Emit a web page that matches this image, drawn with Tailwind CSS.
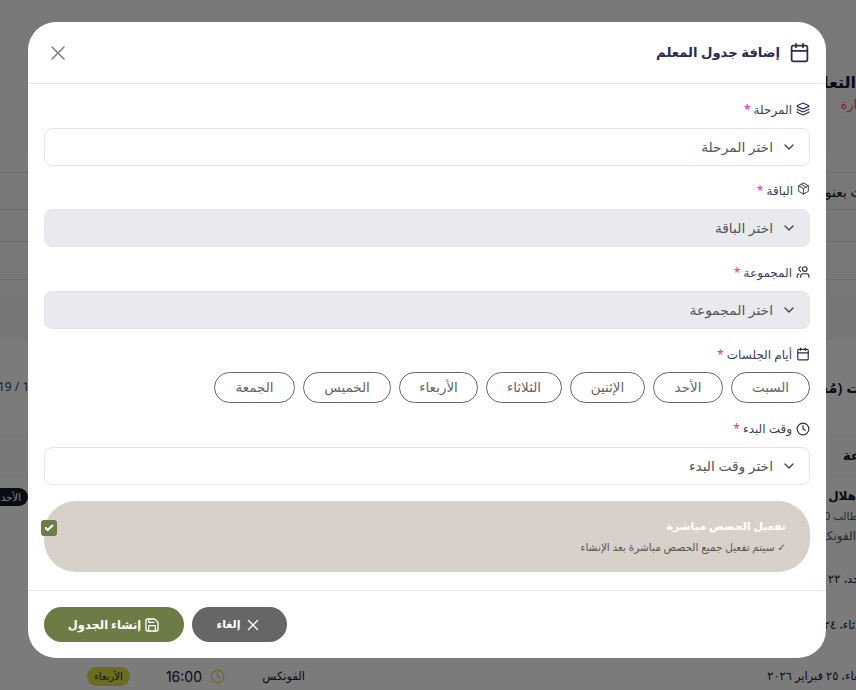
<!DOCTYPE html>
<html lang="ar" dir="rtl">
  <head>
    <meta charset="UTF-8" />
    <title>إضافة جدول المعلم</title>
    <meta content="width=device-width, initial-scale=1" name="viewport" />
    <script src="https://cdn.jsdelivr.net/npm/@tailwindcss/browser@4"></script>
  </head>
  <body class="relative w-[856px] h-[690px] overflow-hidden bg-[#f0f0f0] font-['Noto_Sans','DejaVu_Sans',sans-serif] text-[#111827]">
    <!-- page behind the dialog -->
    <div class="h-[690px] overflow-hidden">
      <div class="-mr-[30px] -ml-[10px]">
        <div class="h-[155px] pt-[70px] pr-[30px]">
          <p class="text-[16px] leading-6 font-bold whitespace-nowrap">التعليمات</p>
          <p class="text-[13px] leading-5 text-[#e2586b] whitespace-nowrap -mr-[18px]">الإدارة</p>
        </div>
        <div class="h-[17px] bg-[#f2f2f2]"></div>
        <div class="h-[38px] border-y border-[#d8d8d8] flex items-center text-[14px] pr-[5px] whitespace-nowrap">ابحث بعنوان</div>
        <div class="h-[32px] border-b border-[#d8d8d8]"></div>
        <div class="h-[38px] border-b border-[#d8d8d8]"></div>
        <div class="h-[16px]"></div>
        <div class="h-[44px] bg-[#ededed]"></div>
        <div class="h-[94px] bg-[#f6f6f6] flex items-center justify-between">
          <span class="font-semibold text-[15px] -mr-[24px] whitespace-nowrap">الجلسات (مُجدولة)</span>
          <span class="text-[#374151] text-[12px] ml-[8px]" dir="ltr">19 / 1</span>
        </div>
        <div class="h-[44px] bg-[#f2f2f2] flex items-center text-[13px] font-bold pr-[12px] -mr-[30px] whitespace-nowrap">المجموعة</div>
        <div class="h-[78px] bg-[#f6f6f6] flex justify-between pt-[8px]">
          <div class="pr-[30px] whitespace-nowrap">
            <p class="text-[12px] leading-5 font-bold">هلال فوق</p>
            <p class="text-[10.5px] leading-5 text-[#4b5563] -mr-[2px]">طالب 0</p>
            <p class="text-[12px] leading-5 text-[#4b5563]">الفونكس</p>
          </div>
          <span class="w-[40px] h-[18px] flex items-center justify-start pr-[7px] rounded-full bg-[#111827] text-white text-[10px] -ml-[2px] mt-[2px]">الأحد</span>
        </div>
        <div class="h-[46px] bg-[#f6f6f6] flex items-center text-[11.5px] pr-[16px] whitespace-nowrap">الأحد، ٢٢ فبراير ٢٠٢٦</div>
        <div class="h-[46px] bg-[#f6f6f6] flex items-center text-[11.5px] pr-[14px] whitespace-nowrap">الثلاثاء، ٢٤ فبراير ٢٠٢٦</div>
        <div class="h-[56px] bg-[#f6f6f6] flex items-center text-[11.5px] pr-[8px] whitespace-nowrap">
          <span class="w-[111px] shrink-0">الأربعاء، ٢٥ فبراير ٢٠٢٦</span>
          <span class="mr-[462px] w-[44px] shrink-0">الفونكس</span>
          <svg class="mr-[36px] size-[15px] shrink-0 text-[#d6d83a]" viewBox="0 0 24 24" fill="none" stroke="currentColor" stroke-width="2" stroke-linecap="round" stroke-linejoin="round"><circle cx="12" cy="12" r="10"/><polyline points="12 6 12 12 16 14"/></svg>
          <span class="mr-[8px] w-[35px] shrink-0 text-[14px] font-['Inter',sans-serif]">16:00</span>
          <span class="mr-[37px] w-[43px] shrink-0 h-[19px] flex items-center justify-center rounded-full bg-[#d6d83a] text-[#1f2937] text-[10px]">الأربعاء</span>
        </div>
      </div>
    </div>

    <div class="absolute inset-0 bg-black/50"></div>

    <!-- dialog -->
    <div class="absolute left-[28px] top-[22px] w-[798px] h-[636px] bg-white rounded-[28px] flex flex-col overflow-hidden">
      <div class="h-[62px] shrink-0 flex items-center justify-between px-4 border-b border-[#e5e7eb]">
        <div class="flex items-center gap-[9px]">
          <svg class="size-[21px] text-[#2a2d52]" viewBox="0 0 24 24" fill="none" stroke="currentColor" stroke-width="2" stroke-linecap="round" stroke-linejoin="round"><path d="M8 2v4"/><path d="M16 2v4"/><rect width="18" height="18" x="3" y="4" rx="2"/><path d="M3 10h18"/></svg>
          <h2 class="text-[13.2px] tracking-[-0.75px] font-bold text-[#2a2d52]">إضافة جدول المعلم</h2>
        </div>
        <svg class="size-6 ml-[2px] text-[#808080]" viewBox="0 0 24 24" fill="none" stroke="currentColor" stroke-width="1.6" stroke-linecap="round" stroke-linejoin="round"><path d="M18 6 6 18"/><path d="m6 6 12 12"/></svg>
      </div>

      <div class="h-[506px] shrink-0 px-4 pt-[15px] flex flex-col">
        <label class="h-[29px] flex items-start gap-1 text-[12px] leading-[22px] text-[#3b3d5c]">
          <svg class="size-[14px] mt-[3px] text-[#2a2d52]" viewBox="0 0 24 24" fill="none" stroke="currentColor" stroke-width="2" stroke-linecap="round" stroke-linejoin="round"><path d="M12.83 2.18a2 2 0 0 0-1.66 0L2.6 6.08a1 1 0 0 0 0 1.83l8.58 3.91a2 2 0 0 0 1.66 0l8.58-3.9a1 1 0 0 0 0-1.83z"/><path d="M2 12a1 1 0 0 0 .58.91l8.6 3.91a2 2 0 0 0 1.65 0l8.58-3.9A1 1 0 0 0 22 12"/><path d="M2 17a1 1 0 0 0 .58.91l8.6 3.91a2 2 0 0 0 1.65 0l8.58-3.9A1 1 0 0 0 22 17"/></svg>
          <span>المرحلة <span class="text-[#f01cc0]">*</span></span>
        </label>
        <div class="h-[38px] shrink-0 flex items-center gap-2 pr-[12px] rounded-lg border border-[#e2e4e9] bg-white text-[13.8px] text-[#555]">
          <svg class="size-[16px] text-[#444]" viewBox="0 0 24 24" fill="none" stroke="currentColor" stroke-width="2" stroke-linecap="round" stroke-linejoin="round"><path d="m6 9 6 6 6-6"/></svg>
          <span>اختر المرحلة</span>
        </div>

        <label class="h-[29px] mt-[14px] flex items-start gap-1 text-[12px] leading-[22px] text-[#3b3d5c]">
          <svg class="size-[13px] mt-[2px] text-[#555]" viewBox="0 0 24 24" fill="none" stroke="currentColor" stroke-width="2" stroke-linecap="round" stroke-linejoin="round"><path d="M11 21.73a2 2 0 0 0 2 0l7-4A2 2 0 0 0 21 16V8a2 2 0 0 0-1-1.73l-7-4a2 2 0 0 0-2 0l-7 4A2 2 0 0 0 3 8v8a2 2 0 0 0 1 1.73z"/><path d="M12 22V12"/><path d="m3.3 7 7.703 4.734a2 2 0 0 0 1.994 0L20.7 7"/><path d="m7.5 4.27 9 5.15"/></svg>
          <span>الباقة <span class="text-[#f01cc0]">*</span></span>
        </label>
        <div class="h-[38px] shrink-0 flex items-center gap-2 pr-[12px] rounded-lg border border-[#e2e4e9] bg-[#e9eaee] text-[13.8px] text-[#555]">
          <svg class="size-[16px] text-[#444]" viewBox="0 0 24 24" fill="none" stroke="currentColor" stroke-width="2" stroke-linecap="round" stroke-linejoin="round"><path d="m6 9 6 6 6-6"/></svg>
          <span>اختر الباقة</span>
        </div>

        <label class="h-[29px] mt-[15px] flex items-start gap-1 text-[12px] leading-[22px] text-[#3b3d5c]">
          <svg class="size-[14px] mt-[3px] -scale-x-100 text-[#2a2d52]" viewBox="0 0 24 24" fill="none" stroke="currentColor" stroke-width="2" stroke-linecap="round" stroke-linejoin="round"><path d="M16 21v-2a4 4 0 0 0-4-4H6a4 4 0 0 0-4 4v2"/><circle cx="9" cy="7" r="4"/><path d="M22 21v-2a4 4 0 0 0-3-3.87"/><path d="M16 3.13a4 4 0 0 1 0 7.75"/></svg>
          <span>المجموعة <span class="text-[#f01cc0]">*</span></span>
        </label>
        <div class="h-[38px] shrink-0 flex items-center gap-2 pr-[12px] rounded-lg border border-[#e2e4e9] bg-[#e9eaee] text-[13.8px] text-[#555]">
          <svg class="size-[16px] text-[#444]" viewBox="0 0 24 24" fill="none" stroke="currentColor" stroke-width="2" stroke-linecap="round" stroke-linejoin="round"><path d="m6 9 6 6 6-6"/></svg>
          <span>اختر المجموعة</span>
        </div>

        <label class="h-[29px] mt-[15px] flex items-start gap-1 text-[12px] leading-[22px] text-[#3b3d5c]">
          <svg class="size-[14px] mt-[3px] text-[#2a2d52]" viewBox="0 0 24 24" fill="none" stroke="currentColor" stroke-width="2" stroke-linecap="round" stroke-linejoin="round"><path d="M8 2v4"/><path d="M16 2v4"/><rect width="18" height="18" x="3" y="4" rx="2"/><path d="M3 10h18"/></svg>
          <span>أيام الجلسات <span class="text-[#f01cc0]">*</span></span>
        </label>
        <div class="flex gap-2 text-[13.5px] text-[#666] -mt-[1px]">
          <span class="w-[79px] h-[31px] flex items-center justify-center rounded-full border border-[#666]">السبت</span>
          <span class="w-[70px] h-[31px] flex items-center justify-center rounded-full border border-[#666]">الأحد</span>
          <span class="w-[75px] h-[31px] flex items-center justify-center rounded-full border border-[#666]">الإثنين</span>
          <span class="w-[76px] h-[31px] flex items-center justify-center rounded-full border border-[#666]">الثلاثاء</span>
          <span class="w-[79px] h-[31px] flex items-center justify-center rounded-full border border-[#666]">الأربعاء</span>
          <span class="w-[88px] h-[31px] flex items-center justify-center rounded-full border border-[#666]">الخميس</span>
          <span class="w-[81px] h-[31px] flex items-center justify-center rounded-full border border-[#666]">الجمعة</span>
        </div>

        <label class="h-[29px] mt-[15px] flex items-start gap-1 text-[12px] leading-[22px] text-[#3b3d5c]">
          <svg class="size-[14px] mt-[4px] text-[#2a2d52]" viewBox="0 0 24 24" fill="none" stroke="currentColor" stroke-width="2" stroke-linecap="round" stroke-linejoin="round"><circle cx="12" cy="12" r="10"/><polyline points="12 6 12 12 16 14"/></svg>
          <span>وقت البدء <span class="text-[#f01cc0]">*</span></span>
        </label>
        <div class="h-[38px] shrink-0 flex items-center gap-2 pr-[12px] rounded-lg border border-[#e2e4e9] bg-white text-[13.8px] text-[#555]">
          <svg class="size-[16px] text-[#444]" viewBox="0 0 24 24" fill="none" stroke="currentColor" stroke-width="2" stroke-linecap="round" stroke-linejoin="round"><path d="m6 9 6 6 6-6"/></svg>
          <span>اختر وقت البدء</span>
        </div>

        <div class="h-[71px] mt-4 shrink-0 flex justify-between items-start rounded-[32px] bg-[#d8d1ca] pr-6 pt-[15px]">
          <div>
            <p class="text-[11px] tracking-[-0.3px] leading-5 font-bold text-white">تفعيل الحصص مباشرة</p>
            <p class="text-[10.5px] leading-5 mt-[1px] text-[#555]">✓ سيتم تفعيل جميع الحصص مباشرة بعد الإنشاء</p>
          </div>
          <span class="size-4 -ml-[3px] mt-[4px] flex items-center justify-center rounded-[3px] bg-[#6b7d45]">
            <svg class="size-[10px] text-white" viewBox="0 0 24 24" fill="none" stroke="currentColor" stroke-width="5" stroke-linecap="round" stroke-linejoin="round"><path d="M20 6 9 17l-5-5"/></svg>
          </span>
        </div>
      </div>

      <div class="h-[68px] shrink-0 flex items-start justify-end gap-2 px-4 pt-4 border-t border-[#e5e7eb]">
        <button class="w-[95px] h-[35px] flex items-center justify-center gap-1 rounded-full bg-[#666666] text-white text-[11px] font-semibold">
          <svg class="size-[18px]" viewBox="0 0 24 24" fill="none" stroke="currentColor" stroke-width="1.8" stroke-linecap="round" stroke-linejoin="round"><path d="M18 6 6 18"/><path d="m6 6 12 12"/></svg>
          إلغاء
        </button>
        <button class="w-[140px] h-[35px] flex items-center justify-center gap-[3px] rounded-full bg-[#6b7d45] text-white text-[11.5px] font-semibold">
          <svg class="size-4" viewBox="0 0 24 24" fill="none" stroke="currentColor" stroke-width="2" stroke-linecap="round" stroke-linejoin="round"><path d="M15.2 3a2 2 0 0 1 1.4.6l3.8 3.8a2 2 0 0 1 .6 1.4V19a2 2 0 0 1-2 2H5a2 2 0 0 1-2-2V5a2 2 0 0 1 2-2z"/><path d="M17 21v-7a1 1 0 0 0-1-1H8a1 1 0 0 0-1 1v7"/><path d="M7 3v4a1 1 0 0 0 1 1h7"/></svg>
          إنشاء الجدول
        </button>
      </div>
    </div>
  </body>
</html>
